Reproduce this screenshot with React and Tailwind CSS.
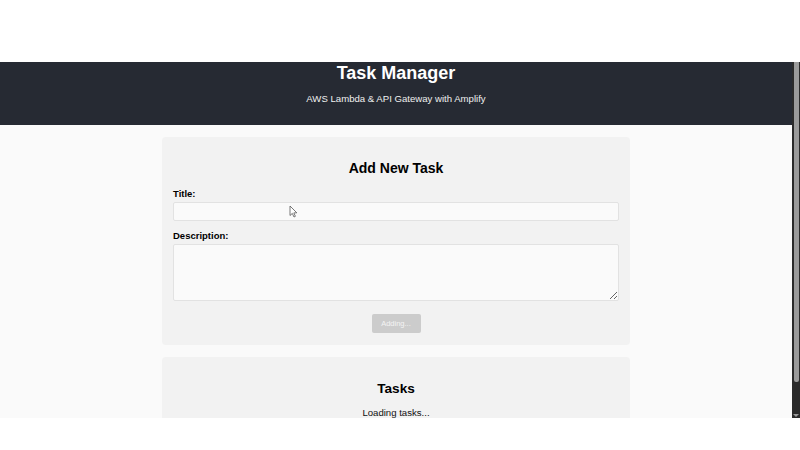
import React from "react";

export default function App() {
  return (
    <div className="w-[800px] h-[450px] bg-white flex flex-col overflow-hidden" style={{ fontFamily: '"Liberation Sans", Arial, sans-serif' }}>
      <div className="h-[62px] shrink-0 bg-white" />
      <div className="h-[356px] shrink-0 flex">
        <div className="flex-1 relative overflow-hidden bg-[#fafafa] flex flex-col">
          <header className="h-[63px] shrink-0 bg-[#262a33] flex flex-col items-center">
            <h1 className="text-[18px] leading-[21px] font-bold text-white mt-px">Task Manager</h1>
            <p className="text-[9.6px] leading-[11px] text-[#f0f0f0] mt-[9px]">AWS Lambda &amp; API Gateway with Amplify</p>
          </header>
          <main className="flex flex-col items-center pt-[12px] gap-[12px]">
            <section className="w-[468px] bg-[#f2f2f2] rounded-[4px] px-[11px] pt-[23px] pb-[12px] flex flex-col">
              <h2 className="text-[14px] leading-[16px] font-bold text-black text-center">Add New Task</h2>
              <label className="text-[9.5px] leading-[11px] font-bold text-black mt-[12px]">Title:</label>
              <input className="mt-[3px] h-[19px] w-full bg-[#fafafa] border border-[#e2e2e2] rounded-[2px] outline-none" />
              <label className="text-[9.5px] leading-[11px] font-bold text-black mt-[9px]">Description:</label>
              <textarea className="mt-[3px] h-[57px] w-full bg-[#fafafa] border border-[#e2e2e2] rounded-[2px] outline-none resize-y block" />
              <div className="flex justify-center mt-[13px]">
                <button className="w-[49px] h-[19px] bg-[#cccccc] rounded-[2px] text-[7.5px] text-[#f4f4f4] flex items-center justify-center">Adding...</button>
              </div>
            </section>
            <section className="w-[468px] bg-[#f2f2f2] rounded-[4px] pt-[24px] pb-[12px] flex flex-col items-center">
              <h2 className="text-[13.6px] leading-[16px] font-bold text-black">Tasks</h2>
              <p className="text-[9.6px] leading-[11px] text-[#111] mt-[10px]">Loading tasks...</p>
            </section>
          </main>
          <svg className="absolute left-[289px] top-[143px]" width="9" height="13" viewBox="0 0 9 13">
            <path d="M1 1 L1 10.5 L3.3 8.4 L5 12 L6.4 11.3 L4.8 7.9 L7.8 7.8 Z" fill="#fff" stroke="#555" strokeWidth="0.8" strokeLinejoin="round" />
          </svg>
        </div>
        <div className="w-[8px] bg-[#2b2b2b] flex flex-col items-center">
          <div className="w-[5px] h-[320px] bg-[#9b9b9b] rounded-b-[2px]" />
          <div className="flex-1" />
          <div className="w-0 h-0 mb-[1px] border-l-[3px] border-r-[3px] border-t-[3px] border-l-transparent border-r-transparent border-t-[#9b9b9b]" />
        </div>
      </div>
      <div className="flex-1 bg-white" />
    </div>
  );
}
